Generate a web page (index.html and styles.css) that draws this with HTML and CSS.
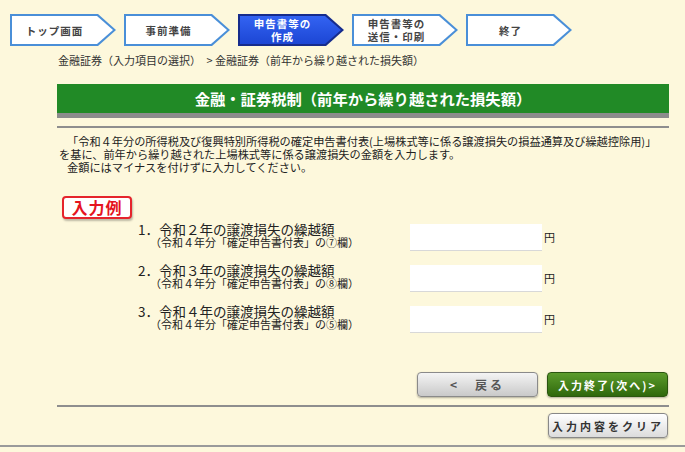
FILE: index.html
```html
<!DOCTYPE html>
<html lang="ja">
<head>
    <meta charset="UTF-8">
    <meta name="viewport" content="width=device-width, initial-scale=1.0">
    <title>金融・証券税制（前年から繰り越された損失額）</title>
    <link rel="stylesheet" href="styles.css">
</head>
<body>
    <div class="steps">
        <div class="step"><div class="step-in">トップ画面</div></div>
        <div class="step"><div class="step-in">事前準備</div></div>
        <div class="step active"><div class="step-in">申告書等の<br>作成</div></div>
        <div class="step"><div class="step-in two">申告書等の<br>送信・印刷</div></div>
        <div class="step"><div class="step-in">終了</div></div>
    </div>

    <div class="crumb">金融証券（入力項目の選択）　&gt; 金融証券（前年から繰り越された損失額）</div>

    <div class="main">
        <h1 class="title-bar">金融・証券税制（前年から繰り越された損失額）</h1>
        <div class="rule"></div>

        <p class="lead">
            <span class="indent">「令和４年分の所得税及び復興特別所得税の確定申告書付表(上場株式等に係る譲渡損失の損益通算及び繰越控除用)」</span><br>
            を基に、前年から繰り越された上場株式等に係る譲渡損失の金額を入力します。<br>
            <span class="indent">金額にはマイナスを付けずに入力してください。</span>
        </p>

        <div class="example">入力例</div>

        <div class="rows">
            <div class="row">
                <div class="row-label">
                    <div class="row-main">1．令和２年の譲渡損失の繰越額</div>
                    <div class="row-sub">（令和４年分「確定申告書付表」の⑦欄）</div>
                </div>
                <input type="text" class="amount">
                <span class="yen">円</span>
            </div>
            <div class="row">
                <div class="row-label">
                    <div class="row-main">2．令和３年の譲渡損失の繰越額</div>
                    <div class="row-sub">（令和４年分「確定申告書付表」の⑧欄）</div>
                </div>
                <input type="text" class="amount">
                <span class="yen">円</span>
            </div>
            <div class="row">
                <div class="row-label">
                    <div class="row-main">3．令和４年の譲渡損失の繰越額</div>
                    <div class="row-sub">（令和４年分「確定申告書付表」の⑤欄）</div>
                </div>
                <input type="text" class="amount">
                <span class="yen">円</span>
            </div>
        </div>

        <div class="actions">
            <button class="btn btn-back">&lt;　戻る</button>
            <button class="btn btn-next">入力終了(次へ)&gt;</button>
        </div>
        <div class="rule"></div>
        <div class="actions sub">
            <button class="btn btn-clear">入力内容をクリア</button>
        </div>
    </div>
    <div class="page-end"></div>
</body>
</html>
```

FILE: styles.css
```css
body {
    margin: 0;
    background: #fdf8dc;
    font-family: "Noto Sans CJK JP", "Noto Sans", sans-serif;
    color: #333;
    height: 452px;
    overflow: hidden;
}

.steps {
    display: flex;
    gap: 8px;
    padding: 14px 0 0 10px;
}

.step {
    width: 106px;
    height: 32px;
    padding: 2px;
    box-sizing: border-box;
    background: #4a8fd8;
    clip-path: polygon(0 0, 88px 0, 106px 16px, 88px 32px, 0 32px);
}

.step-in {
    height: 28px;
    padding-right: 17px;
    background: #fff;
    clip-path: polygon(0 0, 85px 0, 101px 14px, 85px 28px, 0 28px);
    display: flex;
    align-items: center;
    justify-content: center;
    text-align: center;
    font-size: 10.5px;
    line-height: 13px;
    font-weight: bold;
    letter-spacing: 1px;
    color: #444;
}

.step.active {
    background: #162c8c;
}

.step.active .step-in {
    background: linear-gradient(#3363f2, #1c46d4);
    color: #fff;
}

.crumb {
    margin-top: 7px;
    padding-left: 58px;
    font-size: 11px;
    line-height: 14px;
    color: #333;
}

.main {
    margin-left: 57px;
    width: 612px;
}

.title-bar {
    margin: 17px 0 0;
    height: 29px;
    line-height: 29px;
    background: #218a26;
    border-bottom: 5px solid #8c8c8c;
    color: #fff;
    text-align: center;
    font-size: 15.3px;
    font-weight: bold;
}

.rule {
    margin-top: 8px;
    border-top: 2px solid #8e8e8e;
}

.lead {
    margin: 7px 0 0;
    padding-left: 2px;
    font-size: 11.2px;
    line-height: 13px;
    color: #222;
}

.indent {
    padding-left: 8px;
}

.example {
    display: inline-block;
    margin: 22px 0 0 5px;
    width: 66px;
    height: 19px;
    line-height: 19px;
    border: 2px solid #e5242c;
    border-radius: 4px;
    background: #fff;
    box-shadow: 1px 2px 2px rgba(0,0,0,0.25);
    color: #e5141e;
    font-size: 16px;
    font-weight: bold;
    letter-spacing: 1px;
    text-align: center;
}

.rows {
    margin-top: 5px;
}

.row {
    display: flex;
    align-items: flex-start;
    height: 41px;
}

.row-label {
    width: 272px;
    margin-left: 81px;
}

.row-main {
    margin-top: -2px;
    font-size: 13.5px;
    line-height: 14px;
    color: #222;
}

.row-sub {
    padding-left: 12px;
    font-size: 11px;
    line-height: 13px;
    color: #222;
}

.amount {
    width: 132px;
    height: 26px;
    margin: 0;
    padding: 0 4px;
    box-sizing: border-box;
    border: none;
    background: #fff;
    box-shadow: 0 1px 0 #d8d8d8;
}

.yen {
    margin-left: 2px;
    font-size: 11px;
    line-height: 26px;
    color: #222;
}

.actions {
    display: flex;
    justify-content: flex-end;
    gap: 9px;
    margin-top: 25px;
    padding-right: 1px;
}

.actions.sub {
    margin-top: 6px;
}

.btn {
    width: 121px;
    height: 25px;
    padding: 0;
    border-radius: 4px;
    font-family: "Noto Sans CJK JP", sans-serif;
    font-size: 11px;
    font-weight: bold;
    box-shadow: 0 1px 2px rgba(0,0,0,0.3);
}

.btn-back {
    background: linear-gradient(#f4f4f4, #c9c9c9);
    border: 1px solid #8a8a8a;
    color: #555;
    font-size: 12px;
    letter-spacing: 3px;
}

.btn-next {
    background: linear-gradient(#5c9c2c, #2f680c);
    border: 1px solid #2b560f;
    color: #fff;
    letter-spacing: 2px;
}

.btn-clear {
    width: 120px;
    background: linear-gradient(#ffffff, #dcdcdc);
    border: 1px solid #888;
    color: #333;
    letter-spacing: 3px;
}

.page-end {
    margin-top: 7px;
    border-top: 2px solid #9a9a9a;
}
```
